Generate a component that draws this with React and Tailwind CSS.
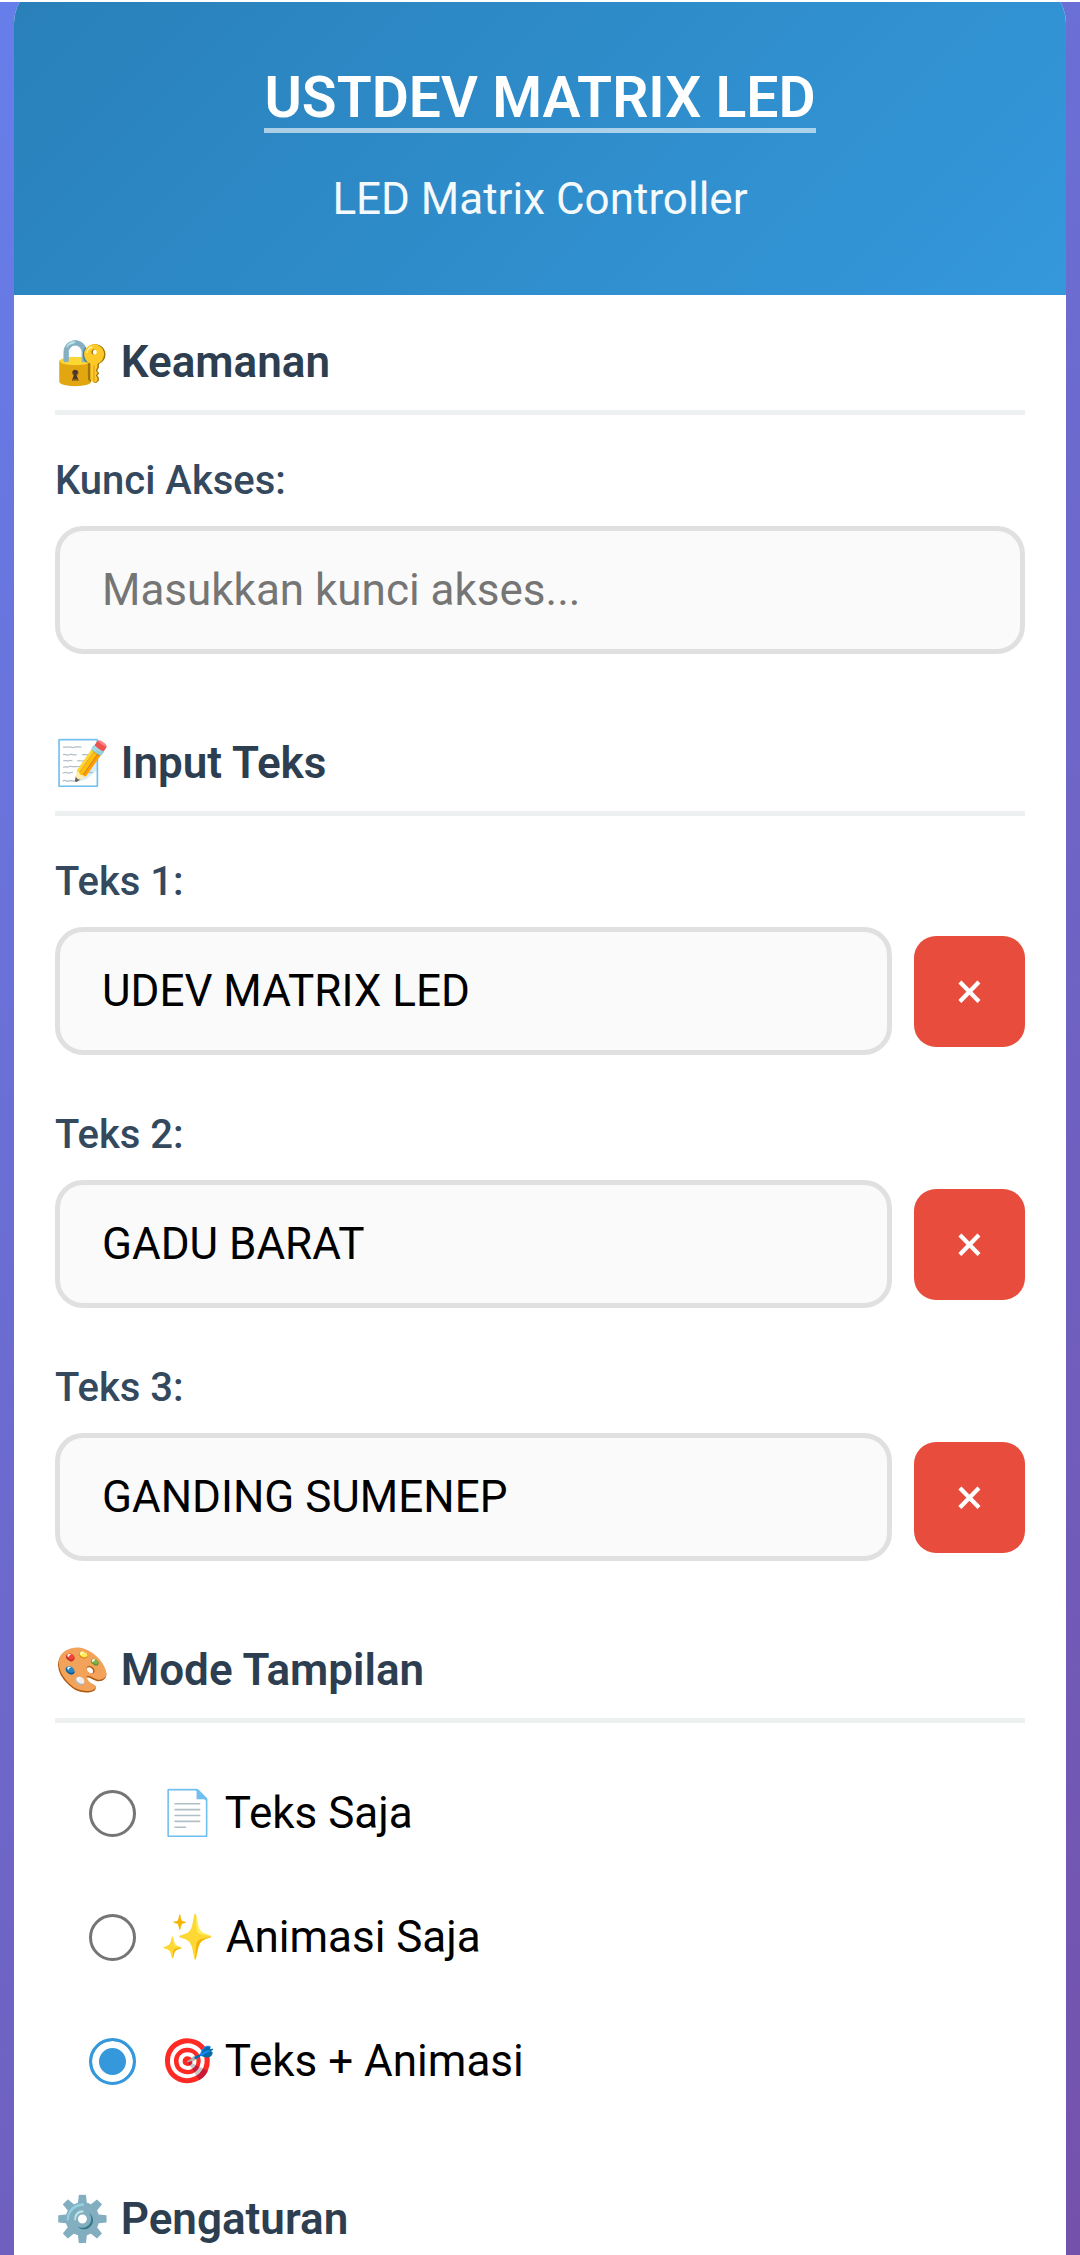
import { useState } from "react";

const field =
  "block w-full min-w-0 rounded-[28px] border-[5px] border-[#e0e0e0] bg-[#fafafa] px-[42px] py-8 text-[44px] leading-[54px] text-black outline-none placeholder:text-[#757575] focus:border-[#3498db]";
const labelStyle = "mb-[21px] block pt-px text-[40px] leading-[48px] font-medium text-[#34495e]";

const modes = [
  { id: "text", label: "📄 Teks Saja" },
  { id: "animation", label: "✨ Animasi Saja" },
  { id: "both", label: "🎯 Teks + Animasi" },
];

function SectionTitle({ children }) {
  return (
    <h2 className="border-b-[5px] border-[#ecf0f1] pb-[22px] text-[44px] leading-[52px] font-semibold text-[#2c3e50]">
      {children}
    </h2>
  );
}

export default function App() {
  const [texts, setTexts] = useState(["UDEV MATRIX LED", "GADU BARAT", "GANDING SUMENEP"]);
  const [mode, setMode] = useState("both");

  const updateText = (index, value) => setTexts(texts.map((t, i) => (i === index ? value : t)));
  const removeText = (index) => setTexts(texts.filter((_, i) => i !== index));

  return (
    <div className="h-screen overflow-hidden border-t-2 border-white bg-linear-[135deg,#667eea_0%,#764ba2_115%] px-3.5 font-['Roboto','Noto_Color_Emoji',sans-serif]">
      <main className="-mt-5 overflow-hidden rounded-[41px] bg-white">
        <header className="flex flex-col items-center bg-linear-[135deg,#2980b9,#3498db] px-10 pt-[86px] pb-[70px] text-center text-white">
          <h1 className="text-[57px] leading-[60px] font-semibold">
            <a href="#" className="block border-b-[5px] border-white/60">
              USTDEV MATRIX LED
            </a>
          </h1>
          <p className="mt-10 text-[44px] leading-[52px] opacity-95">LED Matrix Controller</p>
        </header>

        <div className="flex flex-col px-[41px] pt-[41px] pb-20">
          <section className="mb-[83px]">
            <SectionTitle>🔐 Keamanan</SectionTitle>
            <div className="mt-[41px]">
              <label htmlFor="access-key" className={labelStyle}>
                Kunci Akses:
              </label>
              <input id="access-key" type="text" placeholder="Masukkan kunci akses..." className={field} />
            </div>
          </section>

          <section className="mb-[83px]">
            <SectionTitle>📝 Input Teks</SectionTitle>
            <div className="mt-[41px] flex flex-col gap-[55px]">
              {texts.map((text, i) => (
                <div key={i}>
                  <label htmlFor={`text-${i}`} className={labelStyle}>
                    Teks {i + 1}:
                  </label>
                  <div className="flex items-center gap-[22px]">
                    <input
                      id={`text-${i}`}
                      type="text"
                      value={text}
                      onChange={(e) => updateText(i, e.target.value)}
                      className={field}
                    />
                    <button
                      type="button"
                      aria-label={`Hapus teks ${i + 1}`}
                      onClick={() => removeText(i)}
                      className="size-[111px] shrink-0 rounded-[22px] bg-[#e74c3c] text-[50px] leading-[52px] font-normal text-white"
                    >
                      ×
                    </button>
                  </div>
                </div>
              ))}
            </div>
          </section>

          <section className="mb-[70px]">
            <SectionTitle>🎨 Mode Tampilan</SectionTitle>
            <div className="mt-7 flex flex-col">
              {modes.map(({ id, label }) => (
                <label
                  key={id}
                  className="flex cursor-pointer items-center gap-6 px-[34px] py-9 text-[44px] leading-[52px] text-black"
                >
                  <input
                    type="radio"
                    name="mode"
                    value={id}
                    checked={mode === id}
                    onChange={() => setMode(id)}
                    className="size-[47px] shrink-0 appearance-none rounded-full border-[3px] border-[#757575] bg-white checked:border-[#3498db] checked:bg-[#3498db] checked:shadow-[inset_0_0_0_7px_#fff]"
                  />
                  {label}
                </label>
              ))}
            </div>
          </section>

          <section>
            <SectionTitle>⚙️ Pengaturan</SectionTitle>
          </section>
        </div>
      </main>
    </div>
  );
}
